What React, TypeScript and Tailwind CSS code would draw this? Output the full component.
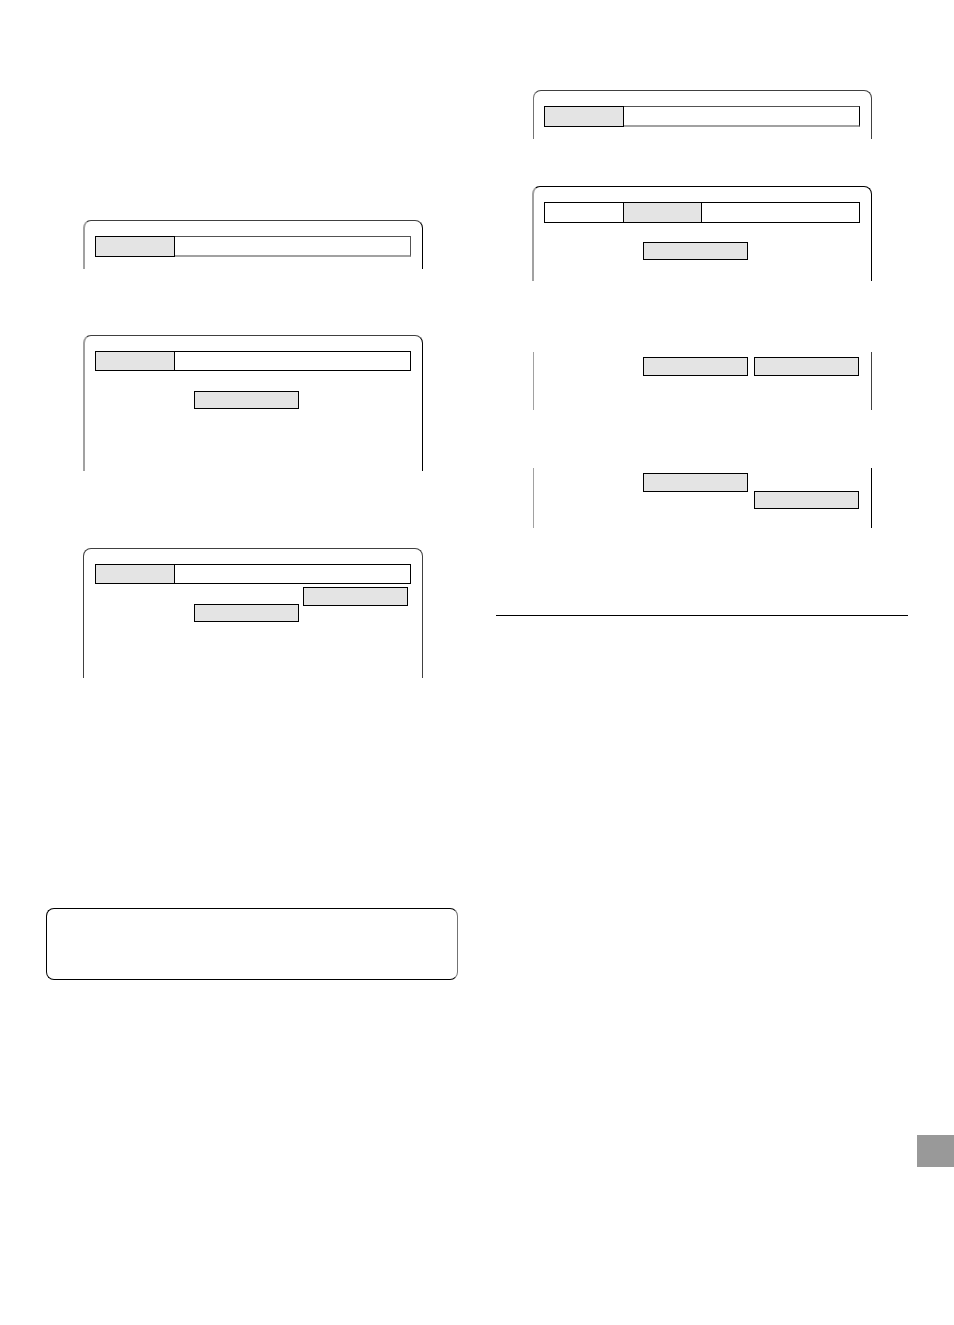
import type { ReactNode } from "react";
import clsx from "clsx";

type PanelProps = {
  className?: string;
  children: ReactNode;
};

export default function App() {
  return (
    <main className="flex min-h-screen items-start bg-white pl-[46px]">
      <div className="grid flex-1 grid-cols-2 items-start gap-[38px]">
        <section className="pt-[220px]">
          <div className="pl-[37px] pr-[35px]">
            <Screen className="border-l-2 border-t-neutral-700 border-l-neutral-400 pb-3 pl-[10px]">
              <SoftMenuBar className="border-r-neutral-600" />
            </Screen>

            <Screen className="mt-[66px] border-l-2 border-t-neutral-700 border-l-neutral-400 pb-[62px] pl-[10px]">
              <MenuBar className="h-5">
                <div className="w-[79px] border-r border-black bg-[#e4e4e4]" />
              </MenuBar>
              <div className="mt-5 flex pl-[99px]">
                <Option className="h-[18px]" />
              </div>
            </Screen>

            <Screen className="mt-[77px] border-l border-t-neutral-700 border-r-neutral-700 border-l-neutral-700 pb-14 pl-[11px]">
              <MenuBar className="h-5">
                <div className="w-[79px] border-r border-black bg-[#e4e4e4]" />
              </MenuBar>
              <div className="mt-[3px] flex items-start gap-1 pl-[99px]">
                <Option className="mt-[17px] h-[18px]" />
                <Option className="h-[19px]" />
              </div>
            </Screen>
          </div>

          <div className="mt-[230px] h-[72px] rounded-lg border border-black border-r-neutral-500" />
        </section>

        <section className="pt-[90px]">
          <div className="px-9">
            <Screen className="ml-px border-l border-t-neutral-700 border-r-neutral-700 border-l-neutral-500 pb-3 pl-[10px]">
              <SoftMenuBar className="border-r-black" />
            </Screen>

            <Screen className="mt-[47px] border-l-2 border-t-black border-l-neutral-400 pb-[21px] pl-[10px]">
              <MenuBar className="h-[21px]">
                <div className="w-[78px]" />
                <div className="w-[79px] border-x border-black bg-[#e4e4e4]" />
              </MenuBar>
              <div className="mt-[19px] flex pl-[99px]">
                <Option className="h-[18px]" />
              </div>
            </Screen>

            <ScreenSlice className="mt-[71px] border-r-neutral-700 pb-[34px]">
              <Option className="h-[19px]" />
              <Option className="h-[19px]" />
            </ScreenSlice>

            <ScreenSlice className="mt-[58px] border-r-black pb-[19px]">
              <Option className="h-[19px]" />
              <Option className="mt-[18px] h-[18px]" />
            </ScreenSlice>
          </div>

          <hr className="mt-[87px] border-t border-black" />
        </section>
      </div>

      <aside className="flex w-[46px] justify-end pt-[1135px]">
        <div className="h-8 w-[37px] bg-[#999999]" />
      </aside>
    </main>
  );
}

function Screen({ className, children }: PanelProps) {
  return (
    <div className={clsx("rounded-t-lg border-t border-r pt-[15px] pr-[11px]", className)}>
      {children}
    </div>
  );
}

// Middle part of a screen, open at the top and the bottom
function ScreenSlice({ className, children }: PanelProps) {
  return (
    <div
      className={clsx(
        "ml-px flex items-start gap-[6px] border-r border-l border-l-neutral-400 pt-[5px] pr-[11px] pl-[109px]",
        className,
      )}
    >
      {children}
    </div>
  );
}

function MenuBar({ className, children }: PanelProps) {
  return <div className={clsx("flex border border-black", className)}>{children}</div>;
}

function SoftMenuBar({ className }: { className: string }) {
  return (
    <div
      className={clsx(
        "flex h-[21px] border-t border-r border-b-2 border-t-neutral-600 border-b-neutral-400",
        className,
      )}
    >
      <div className="-mt-px -mb-[2px] w-20 border border-black bg-[#e4e4e4]" />
    </div>
  );
}

function Option({ className }: { className: string }) {
  return <div className={clsx("w-[105px] shrink-0 border border-black bg-[#e4e4e4]", className)} />;
}
